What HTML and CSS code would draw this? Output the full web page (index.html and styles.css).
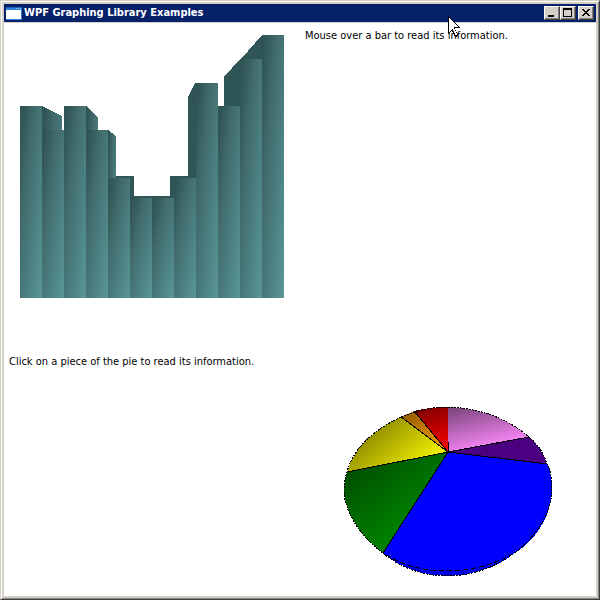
FILE: index.html
```html
<!DOCTYPE html>
<html lang="en">
<head>
<meta charset="utf-8">
<title>WPF Graphing Library Examples</title>
<link rel="stylesheet" href="styles.css">
</head>
<body>
<div class="window">
  <header class="titlebar">
    <svg class="app-icon" width="16" height="13" viewBox="0 0 16 13" shape-rendering="crispEdges" aria-hidden="true">
      <rect width="16" height="13" fill="#2f80d8"/>
      <rect width="16" height="1" fill="#1c5fb8"/>
      <rect x="10" y="1" width="1" height="1" fill="#9ccbf5"/><rect x="12" y="1" width="1" height="1" fill="#9ccbf5"/><rect x="14" y="1" width="1" height="1" fill="#9ccbf5"/>
      <rect y="3" width="15" height="9" fill="#fff"/>
    </svg>
    <h1 class="title">WPF Graphing Library Examples</h1>
    <div class="controls">
      <button class="control" type="button" aria-label="Minimize"><svg width="14" height="12" viewBox="0 0 14 12" shape-rendering="crispEdges"><path d="M3 8h6v2H3z"/></svg></button>
      <button class="control" type="button" aria-label="Maximize"><svg width="14" height="12" viewBox="0 0 14 12" shape-rendering="crispEdges"><path fill-rule="evenodd" d="M2 1h9v9H2zM3 3v6h7V3z"/></svg></button>
      <button class="control close" type="button" aria-label="Close"><svg width="14" height="12" viewBox="0 0 14 12" shape-rendering="crispEdges"><path d="M3 2h2v1h1v1h2V3h1V2h2v1h-1v1H9v1H8v1h1v1h1v1h1v1H9V8H8V7H6v1H5v1H3V8h1V7h1V6h1V5H5V4H4V3H3z"/></svg></button>
    </div>
  </header>
  <main class="content">
    <svg class="chart" viewBox="4 24 296 326" shape-rendering="crispEdges" role="img" aria-label="Bar chart">
      <defs>
        <linearGradient id="bar" x1="0" y1="0" x2="1" y2="1"><stop offset="0" stop-color="#2f5152"/><stop offset="0.12" stop-color="#335859"/><stop offset="0.35" stop-color="#426c6d"/><stop offset="0.7" stop-color="#4d8385"/><stop offset="1" stop-color="#5a9795"/></linearGradient>
      </defs>
      <g class="sides">
        <path d="M108 178l4-2h22v122h-26z"/>
        <path d="M130 199l3-3h41v102h-44z"/>
        <path d="M170 298V176h22l4 2v120z"/>
        <path d="M188 298V97l7-14h1v215z"/>
        <path d="M241 298V59l21-24v263z"/>
        <path d="M224 298V77l16-18v239z"/>
      </g>
      <g fill="url(#bar)">
        <rect x="20" y="106" width="22" height="192"/>
        <path d="M42 106l20 10v182H42z"/>
        <rect x="42" y="130" width="22" height="168"/>
        <path d="M86 106l12 11v181H86z"/>
        <rect x="64" y="106" width="22" height="192"/>
        <path d="M108 130l8 6v162h-8z"/>
        <rect x="86" y="130" width="22" height="168"/>
        <rect x="108" y="178" width="22" height="120"/>
        <rect x="130" y="198" width="22" height="100"/>
        <rect x="152" y="198" width="22" height="100"/>
        <rect x="174" y="178" width="22" height="120"/>
        <rect x="196" y="83" width="22" height="215"/>
        <rect x="218" y="106" width="22" height="192"/>
        <rect x="240" y="59" width="22" height="239"/>
        <rect x="262" y="35" width="22" height="263"/>
      </g>
    </svg>
    <p class="info">Mouse over a bar to read its information.</p>
    <p class="info">Click on a piece of the pie to read its information.</p>
    <svg class="chart" viewBox="300 350 296 246" shape-rendering="crispEdges" role="img" aria-label="Pie chart">
      <defs>
        <linearGradient id="pink" x1="0.2" y1="0" x2="0.55" y2="0.8"><stop offset="0" stop-color="#804880"/><stop offset="1" stop-color="#ee82ee"/></linearGradient>
        <linearGradient id="red" x1="0.5" y1="0" x2="0.8" y2="1"><stop offset="0" stop-color="#850000"/><stop offset="1" stop-color="#ff0000"/></linearGradient>
        <linearGradient id="orange" x1="0" y1="0" x2="1" y2="1"><stop offset="0" stop-color="#8a5600"/><stop offset="1" stop-color="#ffa500"/></linearGradient>
        <linearGradient id="yellow" x1="0.15" y1="0.2" x2="1" y2="0.75"><stop offset="0" stop-color="#858000"/><stop offset="1" stop-color="#ffff00"/></linearGradient>
        <linearGradient id="green" x1="0.1" y1="0.1" x2="0.6" y2="0.7"><stop offset="0" stop-color="#004d00"/><stop offset="1" stop-color="#008000"/></linearGradient>
      </defs>
      <path fill="#0000e0" d="M383 553C400 568 424 576 448 576C502 576 552 531 552 489L448 452z"/>
      <path fill="#0000ff" d="M448 452L547 464C551 471 552 480 552 489C552 518 532 545 511 555C494 564 472 571 448 571C424 571 402 565 383 553z"/>
      <path fill="#0000ff" d="M552 489C552 522 522 554 490 568L480 540z"/>
      <path fill="url(#green)" d="M448 452L383 553C361 537 344 512 344 490Q344 480 347 472z"/>
      <path fill="url(#yellow)" d="M448 452L347 472C353 449 373 430 401 417z"/>
      <path fill="url(#orange)" d="M448 452L401 417L414 411z"/>
      <path fill="url(#red)" d="M448 452L414 411Q430 407 448 407z"/>
      <path fill="url(#pink)" d="M448 452V407Q497 409 529 437z"/>
      <path fill="#4b0082" d="M448 452L529 437Q543 449 547 464z"/>
      <g class="edges">
        <path d="M448 452L529 437M448 452L547 464M448 452L383 553M448 452L347 472M448 452L401 417M448 452L414 411M448 442V452"/>
        <path class="rim" d="M448 407Q497 409 529 437Q543 449 547 464C551 471 552 480 552 489C552 531 502 576 448 576C424 576 400 568 383 553C361 537 344 512 344 490Q344 480 347 472C353 449 373 430 401 417Q425 407 448 407"/>
        <path class="fold" d="M386 555C405 566 424 571 448 571C472 571 494 564 511 555"/>
      </g>
    </svg>
  </main>
  <svg class="cursor" width="12" height="21" viewBox="0 0 12 21" shape-rendering="crispEdges" aria-hidden="true">
    <path d="M0 0h1v1h1v1h1v1h1v1h1v1h1v1h1v1h1v1h1v1h1v1h1v1h1v1H7v2h1v2h1v2h1v2H9v1H7v-1H6v-2H5v-2H4v-1H3v1H2v1H1v1H0z"/>
    <path fill="#fff" d="M1 2h1v1h1v1h1v1h1v1h1v1h1v1h1v1h1v1h1v1H6v2h1v2h1v2h1v2H7v-2H6v-2H5v-2H4v1H3v1H2v1H1z"/>
  </svg>
</div>
</body>
</html>
```
FILE: styles.css
```css
* {
  box-sizing: border-box;
}

body {
  margin: 0;
  background: #d4d0c8;
  color: #000;
  font: 11px/14px Tahoma, "DejaVu Sans Condensed", "Noto Sans", sans-serif;
}

.window {
  position: relative;
  display: flex;
  flex-direction: column;
  min-height: 100vh;
  padding: 3px;
  border: 1px solid;
  border-color: #d4d0c8 #404040 #404040 #d4d0c8;
  box-shadow: inset 1px 1px #fff, inset -1px -1px #808080;
}

.titlebar {
  display: flex;
  align-items: center;
  gap: 2px;
  height: 18px;
  padding: 0 2px;
  background: #06206a;
  color: #fff;
}

.app-icon {
  flex: none;
}

.title {
  flex: 1;
  margin: 0;
  font-size: 11px;
  line-height: 18px;
  font-weight: bold;
  white-space: nowrap;
}

.controls {
  display: flex;
}

.control {
  display: flex;
  width: 16px;
  height: 14px;
  padding: 0;
  border: 1px solid;
  border-color: #fff #404040 #404040 #fff;
  background: #d4d0c8;
  box-shadow: inset -1px -1px #808080;
}

.close {
  margin-left: 2px;
}

.content {
  flex: 1;
  display: grid;
  grid-template-columns: 1fr 1fr;
  grid-template-rows: 326fr 246fr;
  margin-top: 1px;
  padding-top: 1px;
  background: #fff;
}

.chart {
  display: block;
  width: 100%;
}

.info {
  margin: 0;
  padding: 5px;
}

.sides {
  fill: #305556;
}

.edges {
  fill: none;
  stroke: #000;
}

.rim {
  stroke-dasharray: 2 1;
}

.fold {
  stroke-dasharray: 5 3;
}

.cursor {
  position: absolute;
  left: 447px;
  top: 15px;
}
```
